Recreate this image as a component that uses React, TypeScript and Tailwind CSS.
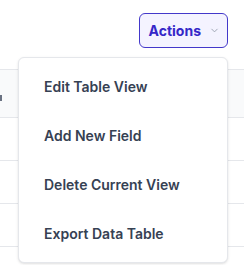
import { ChevronDown } from "lucide-react"

const items = ["Edit Table View", "Add New Field", "Delete Current View", "Export Data Table"]

export default function App() {
  return (
    <div className="relative h-[265px] w-[244px] overflow-hidden bg-white font-['Inter',sans-serif]">
      <div className="flex justify-end pr-4 pt-[13px]">
        <button className="flex h-[35px] items-center gap-[8px] rounded-md border border-[#4338ca] bg-[#f4f3ff] pl-[9px] pr-[7px] text-sm font-bold text-[#3527c8]">
          Actions
          <ChevronDown size={11} strokeWidth={2} className="text-gray-400" />
        </button>
      </div>

      {/* table behind the menu */}
      <div className="mt-[21px] w-full">
        <div className="flex h-[49px] items-center border-y border-gray-200 bg-gray-50">
          <span className="mt-[8px] h-[6px] w-[2px] bg-gray-500" />
        </div>
        <div className="h-[43px] border-b border-gray-200" />
        <div className="h-[43px] border-b border-gray-200" />
        <div className="h-[43px] border-b border-gray-200" />
      </div>

      <div className="absolute left-[18px] top-[57px] w-[210px] rounded-md border border-gray-200 bg-white py-1 shadow-sm">
        {items.map((item) => (
          <div key={item} className="flex h-[49px] items-center px-[25px] text-sm font-semibold text-gray-700">
            {item}
          </div>
        ))}
      </div>
    </div>
  )
}
